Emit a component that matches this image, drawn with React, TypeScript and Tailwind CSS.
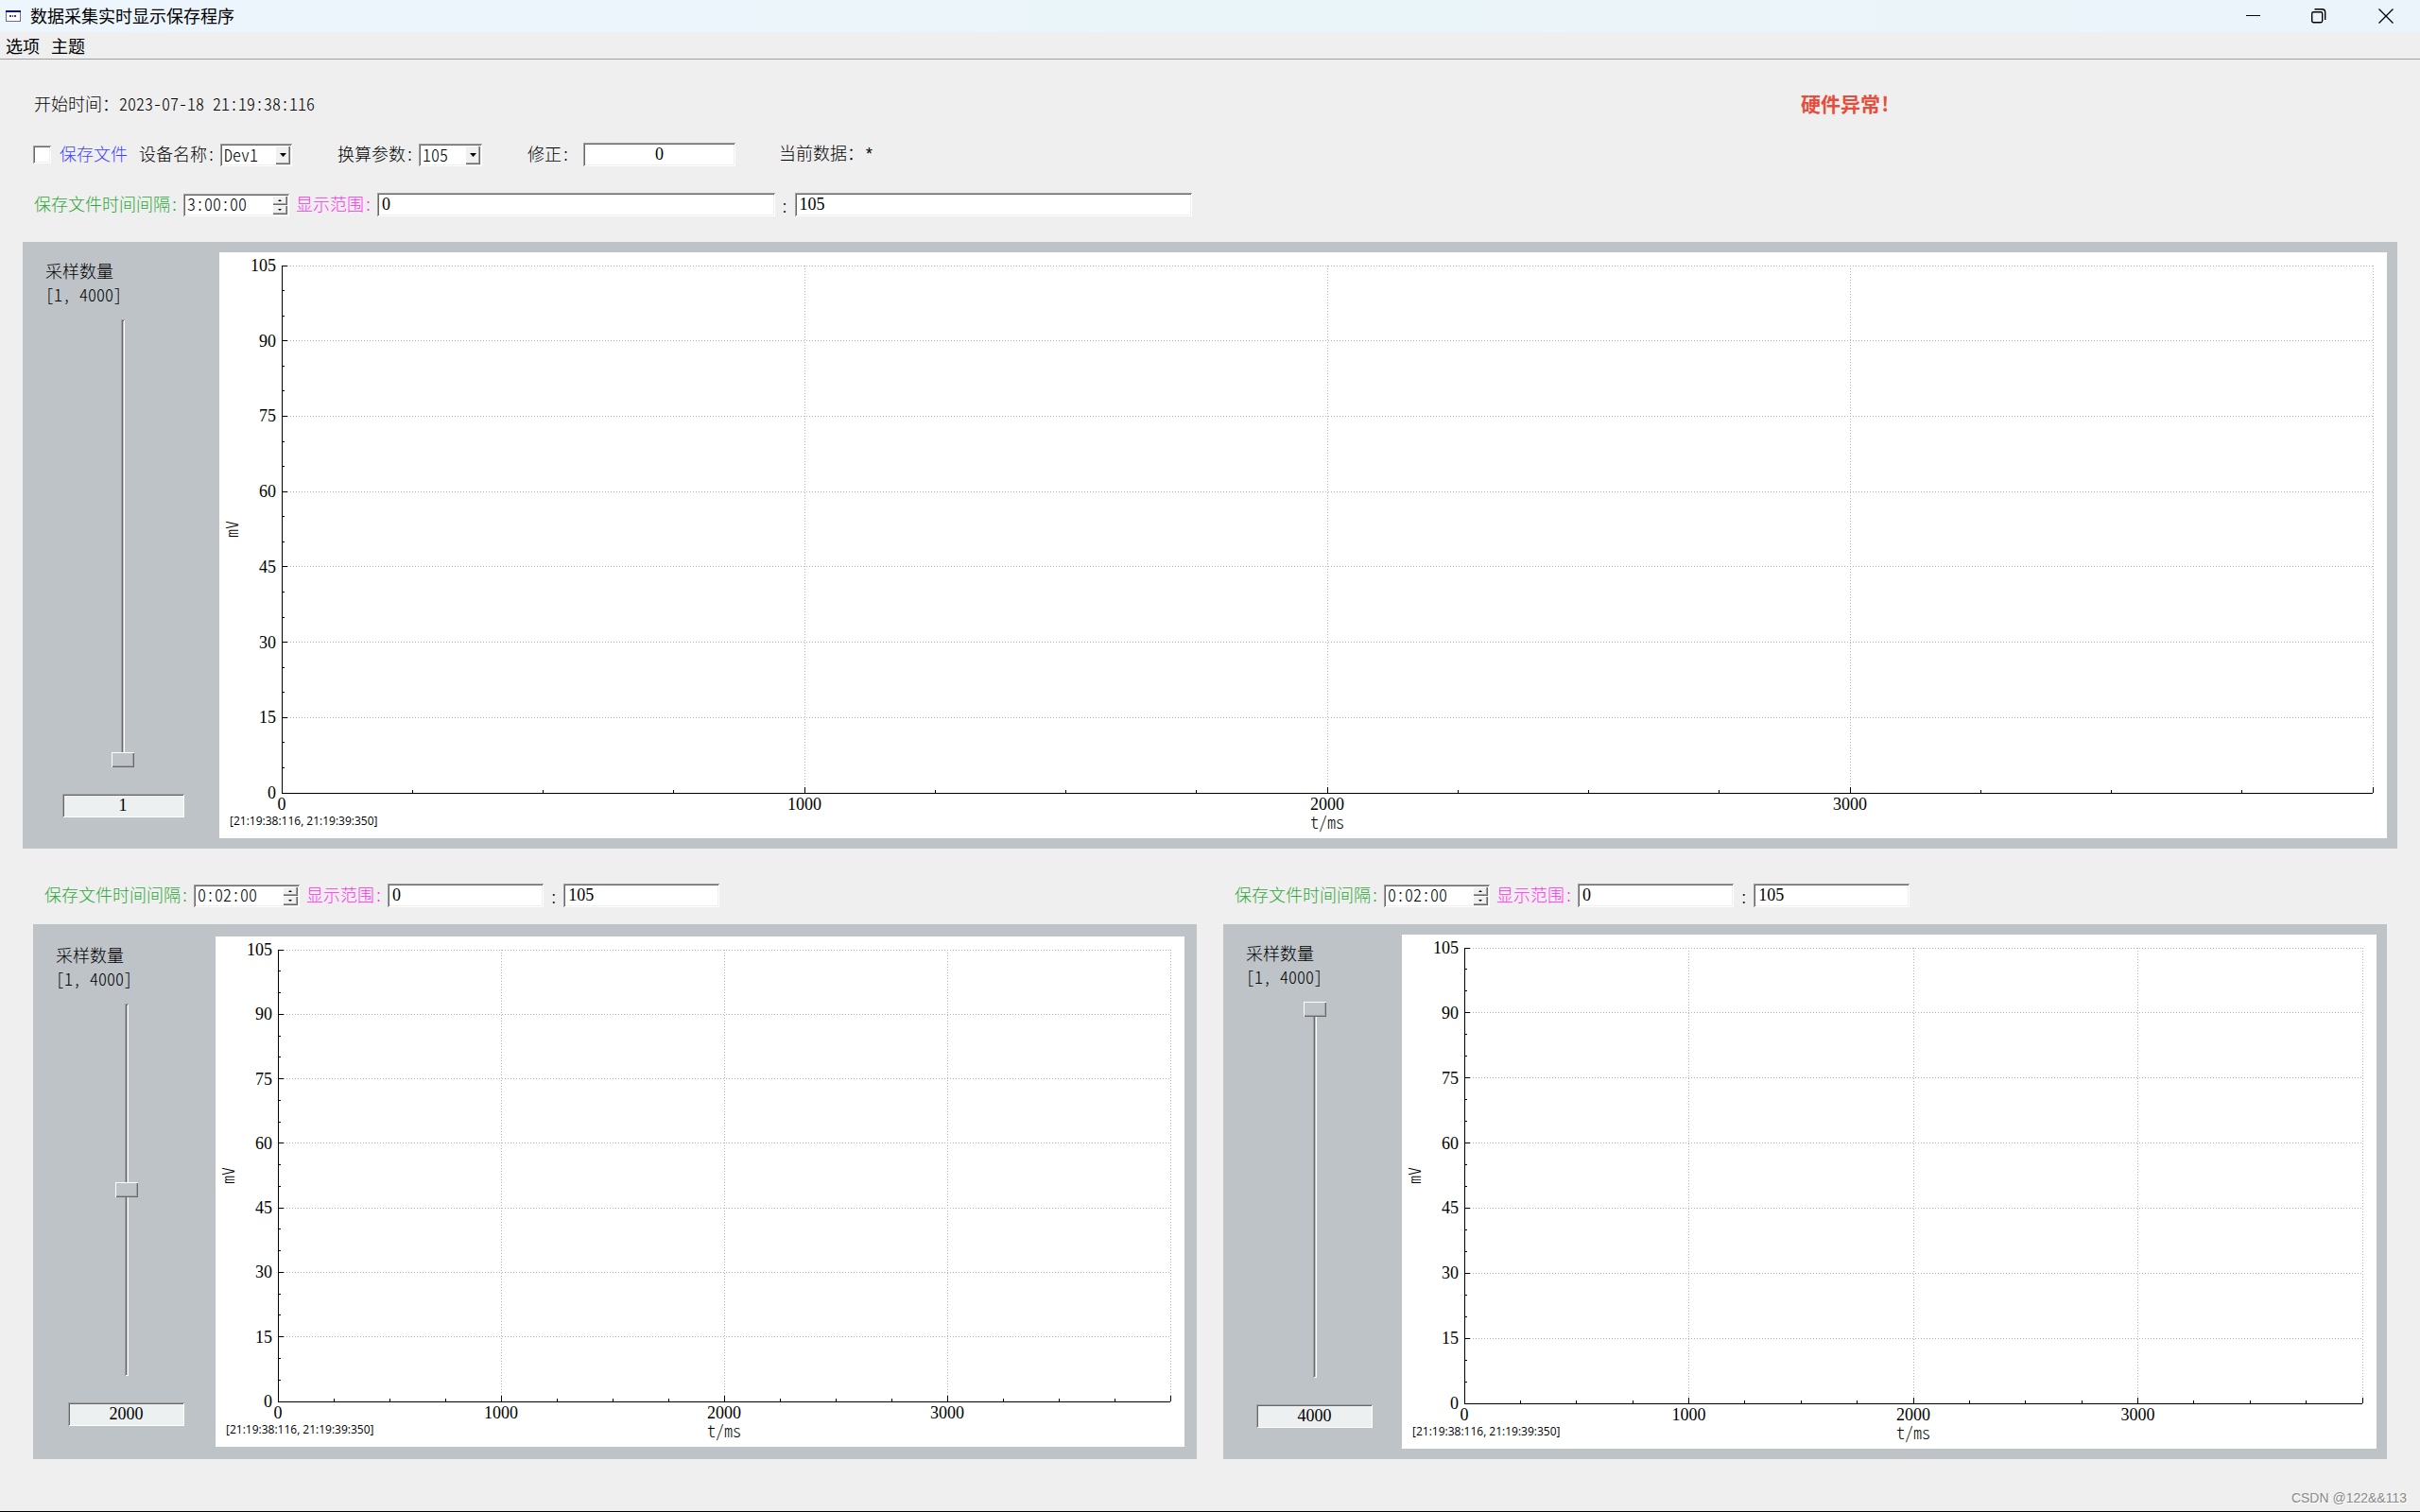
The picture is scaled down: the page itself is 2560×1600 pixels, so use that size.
// App.tsx

import React, { useId, useState } from "react";

const SUNKEN =
  "shadow-[inset_1px_1px_#a0a0a0,inset_-1px_-1px_#fff,inset_2px_2px_#696969,inset_-2px_-2px_#efefef]";
const RAISED =
  "shadow-[inset_1px_1px_#fff,inset_-1px_-1px_#696969,inset_-2px_-2px_#a0a0a0]";
// plain numbers are set in a serif face, digits are half an em wide
const DIGITS = "font-['Liberation_Serif',serif] font-normal";

const Y_TICKS = [0, 15, 30, 45, 60, 75, 90, 105];
const X_TICKS = [0, 1000, 2000, 3000, 4000];
const Y_MAX = 105;
const X_MAX = 4000;

const TitleBar: React.FC = () => (
  <header className="flex h-[34px] shrink-0 items-center bg-linear-to-r from-[#edf5fd] via-[#eaf5f9] to-[#ebf4fa] pl-[6px]">
    <svg width="16" height="12" viewBox="0 0 16 12" shapeRendering="crispEdges">
      <rect width="16" height="12" fill="#6f7478" />
      <rect x="1" y="2" width="14" height="9" fill="#fff" />
      <rect width="16" height="2" fill="#0a0ab4" />
      <path d="M4 5h2v2H4zM7 5h1v2H7zM9 5h2v2H9z" fill="#3838a0" />
    </svg>
    <h1 className="ml-[10px] pb-[3px] text-[18px] font-normal">数据采集实时显示保存程序</h1>
    <div className="ml-auto flex h-full">
      <button aria-label="最小化" className="flex w-[69px] items-center justify-center">
        <svg width="16" height="16" viewBox="0 0 16 16">
          <path d="M0 7.5h15" stroke="#000" />
        </svg>
      </button>
      <button aria-label="还原" className="flex w-[69px] items-center justify-center">
        <svg width="16" height="16" viewBox="0 0 16 16" fill="none" stroke="#000" strokeWidth="1.4">
          <rect x="0.7" y="3.7" width="11" height="11" rx="1.6" />
          <path d="M3.5 0.8h8a3.2 3.2 0 0 1 3.2 3.2v8" />
        </svg>
      </button>
      <button aria-label="关闭" className="flex w-[73px] items-center justify-center">
        <svg width="16" height="16" viewBox="0 0 16 16" stroke="#000" strokeWidth="1.3">
          <path d="M0.5 0.5l15 15M15.5 0.5l-15 15" />
        </svg>
      </button>
    </div>
  </header>
);

const MenuBar: React.FC = () => (
  <nav className="flex h-[29px] shrink-0 items-center gap-3 border-b border-[#a0a0a0] pl-[6px] font-normal">
    <button>选项</button>
    <button>主题</button>
  </nav>
);

interface FieldProps {
  id?: string;
  label?: string;
  value: string;
  className?: string;
}

const Field: React.FC<FieldProps> = ({ id, label, value, className = "" }) => (
  <input
    id={id}
    type="text"
    aria-label={label}
    defaultValue={value}
    className={`h-[25px] min-w-0 rounded-none px-[5px] leading-[25px] outline-none ${DIGITS} ${SUNKEN} ${className}`}
  />
);

interface PickerProps {
  id: string;
  options: string[];
  className: string;
}

const Picker: React.FC<PickerProps> = ({ id, options, className }) => (
  <div className={`relative h-[24px] bg-white ${SUNKEN} ${className}`}>
    <select id={id} className="block size-full appearance-none pb-[2px] pl-[4px] leading-[22px] outline-none">
      {options.map((o) => (
        <option key={o}>{o}</option>
      ))}
    </select>
    <span
      className={`pointer-events-none absolute top-[2px] right-[2px] bottom-[2px] flex w-[16px] items-center justify-center bg-[#f0f0f0] ${RAISED}`}
    >
      <svg width="7" height="4" viewBox="0 0 7 4">
        <path d="M0 0h7L3.5 4z" />
      </svg>
    </span>
  </div>
);

const TimeSpin: React.FC<{ id: string; value: string }> = ({ id, value }) => (
  <div className={`flex h-[24px] w-[112px] shrink-0 bg-white p-[2px] ${SUNKEN}`}>
    <input
      id={id}
      type="text"
      defaultValue={value}
      className="w-0 flex-1 pb-[3px] pl-[2px] leading-[17px] outline-none"
    />
    <div className="flex w-[16px] flex-col">
      <button aria-label="增加" className={`flex flex-1 items-center justify-center bg-[#f0f0f0] ${RAISED}`}>
        <svg width="4" height="2" viewBox="0 0 4 2">
          <path d="M2 0l2 2H0z" />
        </svg>
      </button>
      <button aria-label="减少" className={`flex flex-1 items-center justify-center bg-[#f0f0f0] ${RAISED}`}>
        <svg width="4" height="2" viewBox="0 0 4 2">
          <path d="M0 0h4L2 2z" />
        </svg>
      </button>
    </div>
  </div>
);

interface RangeRowProps {
  interval: string;
  className: string;
}

const RangeRow: React.FC<RangeRowProps> = ({ interval, className }) => {
  const id = useId();

  return (
    <div className={`flex h-[53px] shrink-0 items-center whitespace-nowrap ${className}`}>
      <label htmlFor={`${id}-time`} className="mr-[5px] pb-[3px] text-[#2ca836]">
        保存文件时间间隔:
      </label>
      <TimeSpin id={`${id}-time`} value={interval} />
      <label htmlFor={`${id}-min`} className="mr-[5px] ml-[7px] pb-[3px] text-[#ff2cf0]">
        显示范围:
      </label>
      <Field id={`${id}-min`} value="0" className="flex-1 bg-white" />
      <span className="mx-[6px]">:</span>
      <Field label="显示范围上限" value="105" className="flex-1 bg-white" />
    </div>
  );
};

const Chart: React.FC = () => {
  const xMinor = Array.from({ length: 17 }, (_, i) => i * 250);
  const yMinor = Array.from({ length: 22 }, (_, i) => i * 5);
  const px = (v: number) => `${(v / X_MAX) * 100}%`;
  const py = (v: number) => `${100 - (v / Y_MAX) * 100}%`;

  return (
    <div className="flex min-w-0 flex-1 bg-white pt-[14px] pr-[15px] pb-[48px] pl-[66px]">
      <svg className="h-full min-w-0 flex-1 overflow-visible">
        <g stroke="#b4b4b4" strokeDasharray="1 2" shapeRendering="crispEdges">
          {X_TICKS.slice(1).map((v) => (
            <line key={v} x1={px(v)} x2={px(v)} y1="0" y2="100%" />
          ))}
          {Y_TICKS.slice(1).map((v) => (
            <line key={v} x1="0" x2="100%" y1={py(v)} y2={py(v)} />
          ))}
        </g>
        <g stroke="#000" shapeRendering="crispEdges">
          <line x1="0" x2="0" y1="0" y2="100%" />
          <line x1="0" x2="100%" y1="100%" y2="100%" />
          {yMinor.map((v) => (
            <line key={v} x1="0" x2={v % 15 === 0 ? 6 : 3} y1={py(v)} y2={py(v)} />
          ))}
          {/* ticks grow upwards from the bottom axis */}
          {xMinor.map((v) => (
            <svg key={v} x={px(v)} y="100%" className="overflow-visible">
              <line x1="0" x2="0" y1="0" y2={v % 1000 === 0 ? -6 : -3} />
            </svg>
          ))}
        </g>
        <g className={DIGITS}>
          {Y_TICKS.map((v) => (
            <text key={v} x="-6" y={py(v)} dy="6" textAnchor="end">
              {v}
            </text>
          ))}
          {X_TICKS.slice(0, 4).map((v) => (
            <text key={v} x={px(v)} y="100%" dy="18" textAnchor="middle">
              {v}
            </text>
          ))}
        </g>
        <text x="50%" y="100%" dy="38" textAnchor="middle">
          t/ms
        </text>
        <svg y="50%" className="overflow-visible">
          <text x="0" y="-46" transform="rotate(-90)" textAnchor="middle">
            mV
          </text>
        </svg>
        <text
          x="-55"
          y="100%"
          dy="34"
          className="font-['Open_Sans',sans-serif] text-[12px] font-normal"
        >
          [21:19:38:116, 21:19:39:350]
        </text>
      </svg>
    </div>
  );
};

interface PlotPanelProps {
  initial: number;
  className: string;
  sideClass: string;
  valueClass: string;
}

const PlotPanel: React.FC<PlotPanelProps> = ({ initial, className, sideClass, valueClass }) => {
  const id = useId();
  const [count, setCount] = useState(initial);

  return (
    <section className={`flex min-h-0 bg-[#bdc3c7] ${className}`}>
      <div className={`flex shrink-0 flex-col items-center pt-[7px] pr-5 pb-[22px] pl-6 ${sideClass}`}>
        <label htmlFor={id} className="self-start leading-[25px]">
          采样数量
          <br />
          [1, 4000]
        </label>
        <input
          id={id}
          type="range"
          min={1}
          max={4000}
          value={count}
          onChange={(e) => setCount(Number(e.target.value))}
          className="mt-[14px] mb-[28px] min-h-0 w-[24px] flex-1 appearance-none bg-transparent [direction:rtl] [writing-mode:vertical-lr] [&::-webkit-slider-runnable-track]:w-[4px] [&::-webkit-slider-runnable-track]:bg-[#bdc3c7] [&::-webkit-slider-runnable-track]:shadow-[inset_1px_1px_#a0a0a0,inset_-1px_-1px_#fff,inset_2px_2px_#696969] [&::-webkit-slider-thumb]:ml-[-10px] [&::-webkit-slider-thumb]:h-[16px] [&::-webkit-slider-thumb]:w-[24px] [&::-webkit-slider-thumb]:appearance-none [&::-webkit-slider-thumb]:bg-[#bdc3c7] [&::-webkit-slider-thumb]:shadow-[inset_1px_1px_#fff,inset_-1px_-1px_#696969,inset_-2px_-2px_#a0a0a0]"
        />
        <input
          type="text"
          aria-label="当前采样数量"
          value={count}
          onChange={(e) => setCount(Number(e.target.value) || 1)}
          className={`h-[25px] rounded-none bg-[#ecf0f1] text-center leading-[25px] outline-none ${DIGITS} ${SUNKEN} ${valueClass}`}
        />
      </div>
      <Chart />
    </section>
  );
};

const App: React.FC = () => {
  return (
    <div className="relative flex h-screen min-h-[900px] flex-col border-b border-black bg-[#efefef] font-['Noto_Sans_CJK_SC',sans-serif] text-[18px] leading-[24px] font-light text-black [font-feature-settings:'hwid']">
      <TitleBar />
      <MenuBar />

      <div className="flex shrink-0 flex-col pt-[21px] whitespace-nowrap">
        <div className="flex h-[53px] items-center pb-[4px] pl-9">
          <span className="w-[1869px] shrink">开始时间：2023-07-18 21:19:38:116</span>
          <strong className="text-[21px] font-bold text-[#e74c3c]">硬件异常!</strong>
        </div>
        <div className="flex h-[53px] items-center pl-[35px]">
          <input
            id="save-file"
            type="checkbox"
            className={`mr-[9px] size-[19px] appearance-none bg-white ${SUNKEN}`}
          />
          <label htmlFor="save-file" className="mr-[12px] pb-[3px] text-[#4040ff]">
            保存文件
          </label>
          <label htmlFor="device" className="mr-[5px] pb-[3px]">
            设备名称:
          </label>
          <Picker id="device" options={["Dev1"]} className="mr-[48px] w-[76px]" />
          <label htmlFor="factor" className="mr-[5px] pb-[3px]">
            换算参数:
          </label>
          <Picker id="factor" options={["105"]} className="mr-[48px] w-[67px]" />
          <label htmlFor="offset" className="mr-[14px] pb-[3px]">
            修正:
          </label>
          <Field id="offset" value="0" className="w-[161px] bg-white text-center" />
          <span className="ml-[46px] pb-[3px]">
            当前数据：
            <span className="font-['Liberation_Mono',monospace] font-normal">*</span>
          </span>
        </div>
        <RangeRow interval="3:00:00" className="w-1/2 pr-[19px] pl-9" />
      </div>

      <PlotPanel
        initial={1}
        className="mx-6 mt-[13px] grow-[620] basis-0 p-[11px] pl-0"
        sideClass="w-[208px]"
        valueClass="w-[129px]"
      />

      <div className="mx-[35px] mt-[23px] mb-[55px] grid min-h-0 grow-[623] basis-0 grid-cols-2 gap-7">
        <div className="flex min-h-0 flex-col gap-1">
          <RangeRow interval="0:02:00" className="w-[59%] pl-3" />
          <PlotPanel
            initial={2000}
            className="flex-1 p-[13px] pl-0"
            sideClass="w-[193px]"
            valueClass="w-[123px]"
          />
        </div>
        <div className="flex min-h-0 flex-col gap-1">
          <RangeRow interval="0:02:00" className="w-[59%] pl-3" />
          <PlotPanel
            initial={4000}
            className="flex-1 p-[11px] pl-0"
            sideClass="w-[189px]"
            valueClass="w-[123px]"
          />
        </div>
      </div>

      <span className="absolute right-[14px] bottom-[2px] font-['Liberation_Sans',sans-serif] text-[14px] font-normal text-[#8a8a8a] [text-shadow:1px_1px_#fff]">
        CSDN @122&amp;&amp;113
      </span>
    </div>
  );
};

export default App;
